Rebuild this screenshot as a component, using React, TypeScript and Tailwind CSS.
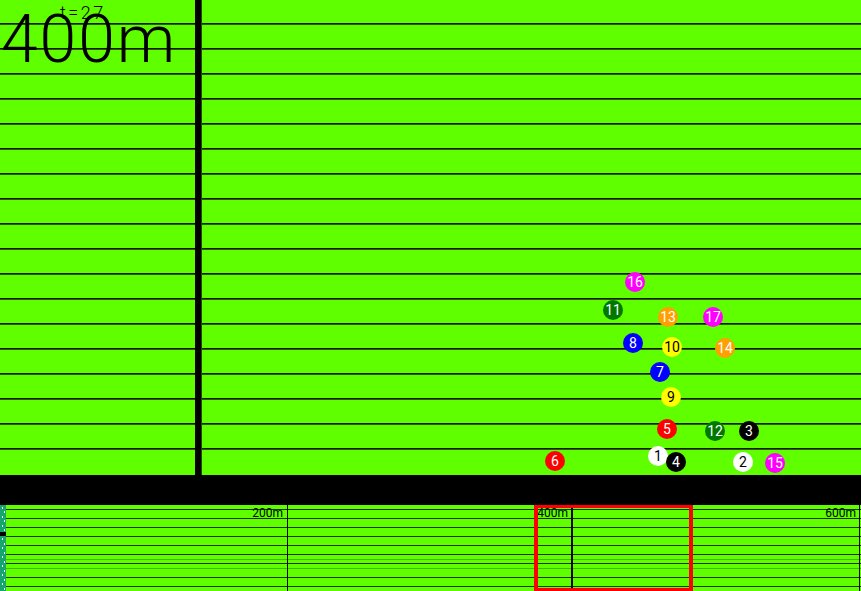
import React from "react";

type Ball = { n: number; x: number; y: number; bg: string; fg: string };

const BALLS: Ball[] = [
  { n: 1, x: 658, y: 456, bg: "#ffffff", fg: "#000000" },
  { n: 2, x: 743, y: 462, bg: "#ffffff", fg: "#000000" },
  { n: 3, x: 749, y: 431, bg: "#000000", fg: "#ffffff" },
  { n: 4, x: 676, y: 462, bg: "#000000", fg: "#ffffff" },
  { n: 5, x: 667, y: 429, bg: "#ff0000", fg: "#ffffff" },
  { n: 6, x: 555, y: 461, bg: "#ff0000", fg: "#ffffff" },
  { n: 7, x: 660, y: 372, bg: "#0000ff", fg: "#ffffff" },
  { n: 8, x: 633, y: 343, bg: "#0000ff", fg: "#ffffff" },
  { n: 9, x: 671, y: 397, bg: "#ffff00", fg: "#000000" },
  { n: 10, x: 672, y: 347, bg: "#ffff00", fg: "#000000" },
  { n: 11, x: 613, y: 310, bg: "#007800", fg: "#ffffff" },
  { n: 12, x: 715, y: 431, bg: "#007800", fg: "#ffffff" },
  { n: 13, x: 668, y: 317, bg: "#ffa000", fg: "#ffffff" },
  { n: 14, x: 725, y: 348, bg: "#ffa000", fg: "#ffffff" },
  { n: 15, x: 775, y: 463, bg: "#ff00ff", fg: "#ffffff" },
  { n: 16, x: 635, y: 282, bg: "#ff00ff", fg: "#ffffff" },
  { n: 17, x: 713, y: 317, bg: "#ff00ff", fg: "#ffffff" },
];

const LANES = Array.from({ length: 19 }, (_, i) => i);

// minimap segments: [type, height]; g = green, d = dark line, l = light line
const MINI: [string, number][] = [
  ["g", 4], ["d", 1], ["g", 8], ["d", 1], ["g", 8], ["d", 1], ["g", 8], ["d", 1],
  ["g", 8], ["d", 1], ["g", 8], ["d", 1], ["g", 4], ["l", 1], ["g", 3], ["d", 1],
  ["g", 4], ["l", 1], ["g", 8], ["d", 1], ["g", 8], ["d", 1], ["g", 4],
];

const DOTS = [2, 6, 11, 15, 20, 24, 33, 38, 42, 47, 51, 56, 60, 65, 69, 74, 78, 83];

export default function App() {
  return (
    <div
      className="w-[861px] h-[591px] flex flex-col overflow-hidden bg-black"
      style={{ fontFamily: "Roboto, 'Liberation Sans', sans-serif" }}
    >
      {/* main track */}
      <div className="relative h-[475px] flex flex-col bg-[#5fff00]">
        {LANES.map((i) => (
          <div key={i} className="h-[25px] flex flex-col">
            <div className="flex-1 bg-[#5fff00]" />
            {i < 18 && (
              <>
                <div className="h-px bg-[#0a1a00]" />
                <div className="h-px bg-[#2a5c00]" />
              </>
            )}
          </div>
        ))}
        {/* 400m line */}
        <div className="absolute top-0 bottom-0 left-[195px] w-[6px] bg-black" />
        <div className="absolute top-0 bottom-0 left-[201px] w-px bg-[#1f4a00]" />

        <div className="absolute left-[1px] top-[7px] text-[66px] leading-none font-light tracking-[2px] text-black">
          400m
        </div>
        <div className="absolute left-[60px] top-[4px] text-[18px] leading-none font-light tracking-[2.5px] text-black">
          t=27
        </div>

        {BALLS.map((b) => (
          <div
            key={b.n}
            className="absolute w-[20px] h-[20px] rounded-full flex items-center justify-center text-[14px] leading-none font-normal"
            style={{ left: b.x - 10, top: b.y - 10, backgroundColor: b.bg, color: b.fg }}
          >
            {b.n}
          </div>
        ))}
      </div>

      {/* black band */}
      <div className="h-[30px] bg-black" />

      {/* minimap */}
      <div className="relative h-[86px] flex bg-[#5fff00]">
        <div className="relative w-[6px] h-full bg-[#14a66c]">
          <div className="absolute left-0 top-[27px] w-[6px] h-[4px] bg-black" />
          {DOTS.map((y, k) => (
            <div
              key={k}
              className="absolute w-px h-[2px] bg-white"
              style={{ top: y, left: k % 2 === 0 ? 2 : 4 }}
            />
          ))}
        </div>
        <div className="flex-1 flex flex-col">
          {MINI.map(([t, h], k) => (
            <div
              key={k}
              className={
                t === "g" ? "bg-[#5fff00]" : t === "d" ? "bg-[#163300]" : "bg-[#45b800]"
              }
              style={{ height: h }}
            />
          ))}
        </div>

        <div className="absolute top-0 bottom-0 left-[287px] w-px bg-black" />
        <div className="absolute top-0 bottom-0 left-[571px] w-[2px] bg-black" />
        <div className="absolute top-0 bottom-0 left-[859px] w-px bg-black" />

        <div className="absolute top-[2px] right-[578px] text-[12px] leading-none font-normal text-black">
          200m
        </div>
        <div className="absolute top-[2px] right-[293px] text-[12px] leading-none font-normal text-black">
          400m
        </div>
        <div className="absolute top-[2px] right-[5px] text-[12px] leading-none font-normal text-black">
          600m
        </div>

        <div className="absolute left-[534px] top-0 w-[159px] h-[86px] border-x-4 border-y-[3px] border-[#ff0000]" />
      </div>
    </div>
  );
}
